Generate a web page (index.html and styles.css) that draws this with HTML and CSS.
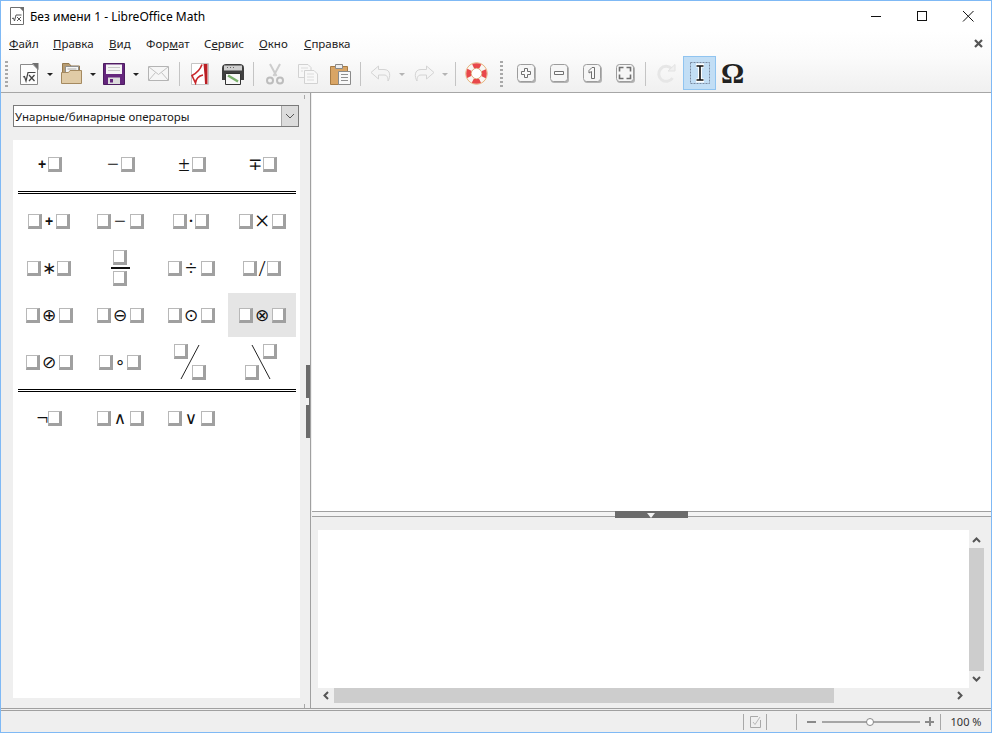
FILE: index.html
```html
<!DOCTYPE html>
<html lang="ru">
<head>
    <meta charset="UTF-8">
    <title>Без имени 1 - LibreOffice Math</title>
    <link rel="stylesheet" href="styles.css">
</head>
<body>
<div class="window">

    <!-- title bar -->
    <div class="titlebar">
        <svg class="app-icon" width="16" height="18" viewBox="0 0 16 18">
            <path d="M1.5 .5H11L14.5 4V17.5H1.5Z" fill="#fff" stroke="#6e6e6e"/>
            <path d="M10.5 0H15V5Z" fill="#6e6e6e"/>
            <path d="M3 11.5L4.5 11L5.5 14L7 8H12.5" fill="none" stroke="#555"/>
            <path d="M8 10L12 14M12 10L8 14" stroke="#555"/>
        </svg>
        <span class="title-text">Без имени 1 - LibreOffice Math</span>
        <div class="win-controls">
            <svg class="win-btn" width="46" height="30" viewBox="0 0 46 30"><path d="M18 15.5H28" stroke="#111"/></svg>
            <svg class="win-btn" width="46" height="30" viewBox="0 0 46 30"><rect x="18.5" y="10.5" width="9" height="9" fill="none" stroke="#111"/></svg>
            <svg class="win-btn" width="46" height="30" viewBox="0 0 46 30"><path d="M18 10L28.5 20.5M28.5 10L18 20.5" stroke="#111"/></svg>
        </div>
    </div>

    <!-- menu -->
    <div class="menubar">
        <span class="menu-item m-file"><u>Ф</u>айл</span>
        <span class="menu-item m-edit"><u>П</u>равка</span>
        <span class="menu-item m-view"><u>В</u>ид</span>
        <span class="menu-item m-format">Фор<u>м</u>ат</span>
        <span class="menu-item m-tools">С<u>е</u>рвис</span>
        <span class="menu-item m-window"><u>О</u>кно</span>
        <span class="menu-item m-help"><u>С</u>правка</span>
        <svg class="menu-close" width="9" height="9" viewBox="0 0 9 9"><path d="M1 1L8 8M8 1L1 8" stroke="#555" stroke-width="2.2"/></svg>
    </div>

    <!-- toolbar -->
    <div class="toolbar">
        <div class="grip first"></div>

        <div class="tb-btn">
            <svg width="22" height="24" viewBox="0 0 22 24">
                <path d="M2.5 2.5H15L19.5 7V22.5H2.5Z" fill="#fdfdfd" stroke="#8a8a8a"/>
                <path d="M14 1H20.5V8Z" fill="#707070"/>
                <path d="M5 15L6.5 14.5L8 19L10 10.5H17.5" fill="none" stroke="#444" stroke-width="1.2"/>
                <path d="M11 13L16.5 19M16.5 13L11 19" stroke="#444" stroke-width="1.3"/>
            </svg>
        </div>
        <div class="drop"></div>

        <div class="tb-btn">
            <svg width="21" height="21" viewBox="0 0 21 21">
                <path d="M1.5 .5H8L10 3H18.5V12H1.5Z" fill="#b79c72" stroke="#94794f"/>
                <path d="M4.5 3.5H17.5V11H4.5Z" fill="#f7f7f5" stroke="#8f8f8f"/>
                <path d="M6.5 6H15.5" stroke="#aaa"/>
                <path d="M.5 9.5H7.5L9 7.5H20.5V20.5H.5Z" fill="#e0cba6" stroke="#a58a60"/>
            </svg>
        </div>
        <div class="drop tight"></div>

        <div class="tb-btn">
            <svg width="22" height="22" viewBox="0 0 22 22">
                <path d="M.5 .5H21.5V21.5H.5Z" fill="#64267c" stroke="#4d1c60"/>
                <path d="M3 1.5H19V11H3Z" fill="#f4f4f4"/>
                <path d="M5 4.5H17M5 7.5H17" stroke="#c8c8c8"/>
                <path d="M5 14.5H17V21H5Z" fill="#dcdcdc"/>
                <path d="M7 16H10V19.5H7Z" fill="#64267c"/>
            </svg>
        </div>
        <div class="drop wide"></div>

        <div class="tb-btn">
            <svg width="21" height="15" viewBox="0 0 21 15">
                <path d="M.5 .5H20.5V14.5H.5Z" fill="#f6f6f6" stroke="#b4b4b4"/>
                <path d="M1 1L10.5 8.5L20 1M1 14L7.5 6.5M20 14L13.5 6.5" fill="none" stroke="#c2c2c2"/>
            </svg>
        </div>
        <div class="sep w8"></div>

        <div class="tb-btn">
            <svg width="20" height="22" viewBox="0 0 20 22">
                <path d="M1.5 .5H18.5V21.5H1.5Z" fill="#fff" stroke="#c4c4c4"/>
                <path d="M12 1.5C10 7 7 10 2 12.5L5.5 20C6 16 8 13 13 12" fill="none" stroke="#c8262a" stroke-width="1.6"/>
                <path d="M13.5 1H17.5V21H15L14.5 12Z" fill="#b91f24"/>
            </svg>
        </div>
        <div class="tb-btn">
            <svg width="24" height="22" viewBox="0 0 24 22">
                <path d="M1 5C1 2 3 1 5 1H19C21 1 23 2 23 5V17H1Z" fill="#3f3f3f"/>
                <path d="M3 2.5H21V7.5H3Z" fill="#cfcfcf"/>
                <path d="M6 4.5H7M9 4.5H10M12 4.5H13" stroke="#666"/>
                <path d="M4.5 10.5H19.5V21.5H4.5Z" fill="#f8f8f8" stroke="#333"/>
                <path d="M7 12.5L17 18.5" stroke="#7ab06c" stroke-width="2.5"/>
            </svg>
        </div>
        <div class="sep w9"></div>

        <div class="tb-btn off">
            <svg width="18" height="22" viewBox="0 0 18 22">
                <path d="M4 1L10.5 13M14 1L7.5 13" stroke="#cdcdcd" stroke-width="2"/>
                <circle cx="4" cy="17.5" r="3" fill="none" stroke="#bdbdbd" stroke-width="2"/>
                <circle cx="14" cy="17.5" r="3" fill="none" stroke="#bdbdbd" stroke-width="2"/>
            </svg>
        </div>
        <div class="tb-btn off">
            <svg width="20" height="20" viewBox="0 0 20 20">
                <path d="M.5 .5H10L13 3.5V13.5H.5Z" fill="#f8f8f8" stroke="#d2d2d2"/>
                <path d="M6.5 6.5H16L19.5 10V19.5H6.5Z" fill="#f8f8f8" stroke="#d2d2d2"/>
                <path d="M3 4H10M3 7H5M9 10H16M9 13H16M9 16H16" stroke="#dcdcdc"/>
            </svg>
        </div>
        <div class="tb-btn">
            <svg width="21" height="22" viewBox="0 0 21 22">
                <path d="M.5 3.5H17.5V21.5H.5Z" fill="#d9a565" stroke="#a67b46"/>
                <path d="M5.5 1.5H12.5V5.5H5.5Z" fill="#eee" stroke="#8a8a8a"/>
                <path d="M8.5 8.5H20.5V21.5H8.5Z" fill="#f8f8f8" stroke="#8a8a8a"/>
                <path d="M11 11.5H18M11 14.5H18M11 17.5H18" stroke="#8f8f8f"/>
            </svg>
        </div>
        <div class="sep w7"></div>

        <div class="tb-btn off">
            <svg width="22" height="18" viewBox="0 0 22 18">
                <path d="M8.5 1L1 7.5L8.5 14V10H14C17 10 18 12 18 16C20.5 12 21 4.5 14 4.5H8.5Z" fill="#f5f5f5" stroke="#d4d4d4"/>
            </svg>
        </div>
        <div class="drop off-arrow"></div>
        <div class="tb-btn off">
            <svg width="22" height="18" viewBox="0 0 22 18">
                <path d="M13.5 1L21 7.5L13.5 14V10H8C5 10 4 12 4 16C1.5 12 1 4.5 8 4.5H13.5Z" fill="#f5f5f5" stroke="#d4d4d4"/>
            </svg>
        </div>
        <div class="drop off-arrow w11"></div>
        <div class="sep w9"></div>

        <div class="tb-btn">
            <svg width="23" height="23" viewBox="0 0 23 23">
                <circle cx="11.5" cy="11.5" r="10.8" fill="#f6e7d4" stroke="#e5b27a"/>
                <circle cx="11.5" cy="11.5" r="7.8" fill="none" stroke="#f8f6f3" stroke-width="5"/>
                <circle cx="11.5" cy="11.5" r="7.8" fill="none" stroke="#e8484a" stroke-width="5" stroke-dasharray="7.25 5" stroke-dashoffset="3.6"/>
                <circle cx="11.5" cy="11.5" r="5.2" fill="#fff" stroke="#d8a06a" stroke-width=".8"/>
            </svg>
        </div>
        <div class="grip mid"></div>

        <div class="tb-btn">
            <svg class="zoom-icon" width="19" height="19" viewBox="0 0 19 19">
                <rect class="shade" x="1" y="2" width="18" height="17" rx="3"/>
                <rect class="key" x=".5" y=".5" width="17" height="17" rx="3"/>
                <path class="glyph" d="M7.5 4.5H10.5V7.5H13.5V10.5H10.5V13.5H7.5V10.5H4.5V7.5H7.5Z"/>
            </svg>
        </div>
        <div class="tb-btn">
            <svg class="zoom-icon" width="19" height="19" viewBox="0 0 19 19">
                <rect class="shade" x="1" y="2" width="18" height="17" rx="3"/>
                <rect class="key" x=".5" y=".5" width="17" height="17" rx="3"/>
                <path class="glyph" d="M4.5 7.5H13.5V10.5H4.5Z"/>
            </svg>
        </div>
        <div class="tb-btn">
            <svg class="zoom-icon" width="19" height="19" viewBox="0 0 19 19">
                <rect class="shade" x="1" y="2" width="18" height="17" rx="3"/>
                <rect class="key" x=".5" y=".5" width="17" height="17" rx="3"/>
                <path class="glyph" d="M9 3.5H11.5V14.5H8.5V7.5L6 9V6.5Z"/>
            </svg>
        </div>
        <div class="tb-btn">
            <svg class="zoom-icon" width="19" height="19" viewBox="0 0 19 19">
                <rect class="shade" x="1" y="2" width="18" height="17" rx="3"/>
                <rect class="key" x=".5" y=".5" width="17" height="17" rx="3"/>
                <path class="corner" d="M3.5 7.5V3.5H7.5M10.5 3.5H14.5V7.5M14.5 10.5V14.5H10.5M7.5 14.5H3.5V10.5"/>
            </svg>
        </div>
        <div class="sep w7"></div>

        <div class="tb-btn off">
            <svg width="20" height="20" viewBox="0 0 20 20">
                <path d="M16.5 14A7.5 7.5 0 1 1 15.5 4.5" fill="none" stroke="#e6e6e6" stroke-width="3"/>
                <path d="M12 7H19V.5Z" fill="#f0f0f0" stroke="#e2e2e2"/>
            </svg>
        </div>
        <div class="tb-btn active">
            <svg width="20" height="22" viewBox="0 0 20 22">
                <rect x=".5" y=".5" width="19" height="21" fill="none" stroke="#7a8aa0" stroke-dasharray="2 1"/>
                <path d="M6 3.5H14M6 18.5H14M10 3.5V18.5" fill="none" stroke="#fff" stroke-width="4"/>
                <path d="M6.5 4H13.5M6.5 18H13.5M10 4V18" fill="none" stroke="#111" stroke-width="1.6"/>
            </svg>
        </div>
        <div class="tb-btn omega">Ω</div>
    </div>

    <!-- main area -->
    <div class="main">
        <aside class="sidebar">
            <div class="combo">
                <span class="combo-text">Унарные/бинарные операторы</span>
                <span class="combo-btn">
                    <svg width="10" height="6" viewBox="0 0 10 6"><path d="M1 1L5 5L9 1" fill="none" stroke="#555"/></svg>
                </span>
            </div>
            <div class="palette">
                <div class="row">
                    <div class="cell"><b class="op bold pre">+</b><i class="ph"></i></div>
                    <div class="cell"><b class="op pre16">−</b><i class="ph"></i></div>
                    <div class="cell"><b class="op pre16">±</b><i class="ph"></i></div>
                    <div class="cell"><b class="op circ pre16">∓</b><i class="ph"></i></div>
                </div>
                <div class="rule"></div>
                <div class="row">
                    <div class="cell"><i class="ph"></i><b class="op bold">+</b><i class="ph"></i></div>
                    <div class="cell"><i class="ph"></i><b class="op">−</b><i class="ph"></i></div>
                    <div class="cell"><i class="ph"></i><b class="op narrow">·</b><i class="ph"></i></div>
                    <div class="cell"><i class="ph"></i><b class="op times">×</b><i class="ph"></i></div>
                </div>
                <div class="row">
                    <div class="cell"><i class="ph"></i><b class="op circ w16">∗</b><i class="ph"></i></div>
                    <div class="cell stack"><i class="ph"></i><span class="frac-bar"></span><i class="ph"></i></div>
                    <div class="cell"><i class="ph"></i><b class="op">÷</b><i class="ph"></i></div>
                    <div class="cell"><i class="ph"></i><b class="op w10">/</b><i class="ph"></i></div>
                </div>
                <div class="row">
                    <div class="cell"><i class="ph"></i><b class="op circ">⊕</b><i class="ph"></i></div>
                    <div class="cell"><i class="ph"></i><b class="op circ">⊖</b><i class="ph"></i></div>
                    <div class="cell"><i class="ph"></i><b class="op circ">⊙</b><i class="ph"></i></div>
                    <div class="cell hover"><i class="ph"></i><b class="op circ">⊗</b><i class="ph"></i></div>
                </div>
                <div class="row">
                    <div class="cell"><i class="ph"></i><b class="op circ">⊘</b><i class="ph"></i></div>
                    <div class="cell"><i class="ph"></i><b class="op circ small">∘</b><i class="ph"></i></div>
                    <div class="cell">
                        <div class="wide-frac">
                            <svg class="slash" width="20" height="36" viewBox="0 0 20 36"><path d="M19 1L1 35" stroke="#222"/></svg>
                            <i class="ph top-left"></i><i class="ph bottom-right"></i>
                        </div>
                    </div>
                    <div class="cell">
                        <div class="wide-frac">
                            <svg class="slash" width="20" height="36" viewBox="0 0 20 36"><path d="M1 1L19 35" stroke="#222"/></svg>
                            <i class="ph top-right"></i><i class="ph bottom-left"></i>
                        </div>
                    </div>
                </div>
                <div class="rule second"></div>
                <div class="row">
                    <div class="cell"><b class="op pre">¬</b><i class="ph"></i></div>
                    <div class="cell"><i class="ph"></i><b class="op circ">∧</b><i class="ph"></i></div>
                    <div class="cell"><i class="ph"></i><b class="op circ">∨</b><i class="ph"></i></div>
                    <div class="cell"></div>
                </div>
            </div>
            <span class="side-handle"><span class="side-arrow"></span></span>
        </aside>

        <section class="workspace">
            <div class="formula-view"></div>
            <div class="split-bar"><span class="split-handle"><span class="split-arrow"></span></span></div>
            <div class="editor-area">
                <div class="editor-row">
                    <div class="editor"></div>
                    <div class="vscroll">
                        <svg width="9" height="6" viewBox="0 0 9 6"><path d="M1 5L4.5 1.5L8 5" fill="none" stroke="#555" stroke-width="2"/></svg>
                        <div class="vthumb"></div>
                        <svg width="9" height="6" viewBox="0 0 9 6"><path d="M1 1L4.5 4.5L8 1" fill="none" stroke="#555" stroke-width="2"/></svg>
                    </div>
                </div>
                <div class="hscroll">
                    <svg width="6" height="9" viewBox="0 0 6 9"><path d="M5 1L1.5 4.5L5 8" fill="none" stroke="#555" stroke-width="2"/></svg>
                    <div class="hthumb"></div>
                    <svg width="6" height="9" viewBox="0 0 6 9"><path d="M1 1L4.5 4.5L1 8" fill="none" stroke="#555" stroke-width="2"/></svg>
                </div>
            </div>
        </section>
    </div>

    <!-- status bar -->
    <div class="statusbar">
        <div class="st-sep"></div>
        <div class="st-doc">
            <svg width="11" height="12" viewBox="0 0 11 12">
                <path d="M10.5 4V11.5H.5V.5H8" fill="none" stroke="#a8a8a8"/>
                <path d="M3 6L5 8.5L10 1" fill="none" stroke="#b8b8b8"/>
            </svg>
        </div>
        <div class="st-sep"></div>
        <div class="st-gap"></div>
        <div class="st-sep"></div>
        <div class="st-zoom">
            <span class="z-minus"></span>
            <span class="z-track"><span class="z-knob"></span></span>
            <span class="z-plus"></span>
        </div>
        <div class="st-sep"></div>
        <div class="st-percent">100 %</div>
    </div>
</div>
</body>
</html>
```

FILE: styles.css
```css
* {
    margin: 0;
    padding: 0;
    box-sizing: border-box;
}

html, body {
    width: 992px;
    height: 733px;
    overflow: hidden;
}

body {
    font-family: "Noto Sans", sans-serif;
    font-size: 12px;
    color: #1a1a1a;
    background: #efefef;
}

.window {
    width: 992px;
    height: 733px;
    display: flex;
    flex-direction: column;
    border: 1px solid #7fb9f5;
    background: #efefef;
}

/* title bar */
.titlebar {
    height: 30px;
    flex: none;
    display: flex;
    align-items: center;
    background: #fff;
    padding-left: 8px;
}

.app-icon {
    flex: none;
}

.title-text {
    margin-left: 5px;
    font-size: 12px;
    color: #000;
}

.win-controls {
    margin-left: auto;
    display: flex;
}

.win-btn {
    display: block;
}

/* menu */
.menubar {
    height: 25px;
    flex: none;
    display: flex;
    align-items: center;
    background: linear-gradient(#fff, #fbfbfb);
    padding-left: 8px;
    padding-right: 8px;
    font-size: 11.5px;
}

.menu-item {
    color: #222;
}

.m-file { width: 44px; }
.m-edit { width: 56px; }
.m-view { width: 37px; }
.m-format { width: 58px; }
.m-tools { width: 55px; }
.m-window { width: 45px; }

.menu-close {
    margin-left: auto;
}

/* toolbar */
.toolbar {
    height: 37px;
    flex: none;
    display: flex;
    align-items: center;
    padding-bottom: 1px;
    background: linear-gradient(#fbfbfb, #f0f0f0);
    border-bottom: 1px solid #a6a6a6;
}

.grip {
    height: 26px;
    background: repeating-linear-gradient(#a9a9a9 0 2px, transparent 2px 4px);
    flex: none;
    background-size: 3px 100%;
    background-repeat: no-repeat;
}

.grip.first {
    width: 11px;
    background-position: 4px 0;
}

.grip.mid {
    width: 17px;
    background-position: 7px 0;
}

.tb-btn {
    width: 33px;
    height: 34px;
    flex: none;
    display: flex;
    align-items: center;
    justify-content: center;
}

.tb-btn.active {
    background: #c2def5;
    border: 1px solid #90c4f0;
    margin-left: 1px;
    align-self: flex-start;
}

.omega {
    font-family: "Liberation Serif", serif;
    font-size: 29px;
    font-weight: bold;
    color: #222;
    line-height: 1;
}

.drop {
    width: 10px;
    height: 34px;
    flex: none;
    position: relative;
}

.drop::after {
    content: "";
    position: absolute;
    left: 2px;
    top: 16px;
    border-left: 3px solid transparent;
    border-right: 3px solid transparent;
    border-top: 3px solid #222;
}

.drop.tight { width: 9px; }
.drop.wide { width: 12px; }
.drop.w11 { width: 11px; }
.drop.wide::after { left: 3px; }
.drop.off-arrow::after { border-top-color: #b4b4b4; }

.sep {
    height: 24px;
    flex: none;
    background: linear-gradient(#c4c4c4, #c4c4c4) center / 1px 100% no-repeat;
}

.sep.w7 { width: 7px; }
.sep.w8 { width: 8px; }
.sep.w9 { width: 9px; }

.zoom-icon .shade {
    fill: #b4b4b4;
}

.zoom-icon .key {
    fill: #f6f6f6;
    stroke: #9c9c9c;
}

.zoom-icon .glyph {
    stroke: #707070;
    fill: #fafafa;
}

.zoom-icon .corner {
    fill: none;
    stroke: #707070;
    stroke-width: 1.6;
}

/* main */
.main {
    flex: 1;
    min-height: 0;
    display: flex;
    border-bottom: 1px solid #a0a0a0;
}

.sidebar {
    width: 310px;
    flex: none;
    position: relative;
    padding: 12px 10px 10px 12px;
    border-right: 1px solid #a0a0a0;
    display: flex;
    flex-direction: column;
    background: #efefef;
}

.sidebar::before,
.sidebar::after {
    content: "";
    position: absolute;
    left: 303px;
    width: 1px;
    height: 4px;
    background: #a8a8a8;
}

.sidebar::before { top: 2px; }
.sidebar::after { bottom: 0; }

.combo {
    height: 22px;
    flex: none;
    display: flex;
    align-items: stretch;
    background: #fff;
    border: 1px solid #7a7a7a;
    margin-right: 1px;
    font-size: 11.5px;
}

.combo-text {
    flex: 1;
    line-height: 21px;
    padding-left: 1px;
}

.combo-btn {
    width: 17px;
    background: #dcdcdc;
    border-left: 1px solid #a8a8a8;
    display: flex;
    align-items: center;
    justify-content: center;
}

.palette {
    margin-top: 13px;
    flex: 1;
    background: #fff;
    padding: 2px 2px 0 2px;
}

.row {
    display: grid;
    grid-template-columns: repeat(4, 68px);
    column-gap: 3px;
    margin-bottom: 3px;
}

.cell {
    height: 44px;
    display: flex;
    align-items: center;
    justify-content: center;
}

.cell.hover {
    background: #e5e5e5;
}

.cell.stack {
    flex-direction: column;
    gap: 2px;
}

.ph {
    display: block;
    width: 14px;
    height: 15px;
    flex: none;
    background: #fff;
    border: 1px solid #b8b8b8;
    border-right: 3px solid #a0a0a0;
    border-bottom: 3px solid #a0a0a0;
}

.op {
    width: 19px;
    text-align: center;
    font-family: "Liberation Serif", "DejaVu Sans", serif;
    font-weight: normal;
    font-size: 21px;
    line-height: 16px;
    color: #111;
    flex: none;
}

.op.bold {
    font-family: "Liberation Sans", sans-serif;
    font-weight: bold;
    font-size: 14px;
    width: 14px;
}

.op.pre { width: 11px; }
.op.pre16 { width: 16px; }
.op.w16 { width: 16px; }
.op.w10 { width: 10px; font-size: 24px; }

.op.narrow {
    width: 8px;
}

.op.times {
    font-size: 27px;
}

.op.circ {
    font-family: "DejaVu Sans", sans-serif;
    font-size: 17px;
}

.op.small {
    width: 14px;
}

.frac-bar {
    width: 19px;
    height: 2px;
    background: #111;
    display: block;
    flex: none;
}

.rule {
    height: 3px;
    border-top: 1px solid #000;
    border-bottom: 1px solid #000;
    margin: 5px -1px 5px 3px;
    width: 278px;
}

.rule.second {
    margin-bottom: 4px;
}

.wide-frac {
    width: 32px;
    height: 36px;
    position: relative;
    margin-right: 2px;
}

.slash {
    position: absolute;
    left: 6px;
    top: 0;
}

.wide-frac .ph {
    position: absolute;
}

.top-left { left: 0; top: 0; }
.bottom-right { right: 0; bottom: 0; }
.top-right { right: 0; top: 0; }
.bottom-left { left: 0; bottom: 0; }

.side-handle {
    position: absolute;
    right: 0;
    top: 272px;
    width: 4px;
    height: 73px;
    background: #6b6b6b;
}

.side-arrow {
    position: absolute;
    left: 0;
    top: 33px;
    width: 3px;
    height: 7px;
    background: #f2f2f2;
}

/* right side */
.workspace {
    flex: 1;
    min-width: 0;
    display: flex;
    flex-direction: column;
    margin-left: 1px;
}

.formula-view {
    height: 418px;
    flex: none;
    background: #fff;
}

.split-bar {
    height: 6px;
    flex: none;
    border-top: 1px solid #a0a0a0;
    border-bottom: 1px solid #a0a0a0;
    background: #f4f4f4;
    position: relative;
}

.split-handle {
    position: absolute;
    left: 303px;
    top: -1px;
    width: 73px;
    height: 7px;
    background: #6b6b6b;
}

.split-arrow {
    position: absolute;
    left: 32px;
    top: 2px;
    border-left: 4px solid transparent;
    border-right: 4px solid transparent;
    border-top: 5px solid #f4f4f4;
}

.editor-area {
    flex: 1;
    min-height: 0;
    padding: 13px 7px 0 6px;
    display: flex;
    flex-direction: column;
}

.editor-row {
    height: 158px;
    flex: none;
    display: flex;
}

.editor {
    flex: 1;
    background: #fff;
}

.vscroll {
    width: 15px;
    flex: none;
    display: flex;
    flex-direction: column;
    align-items: center;
    justify-content: space-between;
    padding: 7px 0 6px;
}

.vthumb {
    width: 15px;
    height: 123px;
    background: #cdcdcd;
}

.hscroll {
    height: 15px;
    flex: none;
    display: flex;
    align-items: center;
    width: 652px;
    padding: 0 7px 0 5px;
}

.hthumb {
    width: 500px;
    height: 15px;
    background: #cdcdcd;
    margin-left: 5px;
    margin-right: auto;
}

/* status bar */
.statusbar {
    height: 22px;
    flex: none;
    display: flex;
    align-items: center;
    justify-content: flex-end;
    border-top: 1px solid #a0a0a0;
    margin-top: 1px;
    background: #efefef;
    font-size: 11px;
    color: #333;
}

.st-sep {
    width: 1px;
    height: 16px;
    background: #a8a8a8;
    flex: none;
}

.st-doc {
    width: 22px;
    display: flex;
    justify-content: center;
}

.st-gap {
    width: 29px;
}

.st-zoom {
    width: 143px;
    display: flex;
    align-items: center;
    padding-left: 10px;
}

.z-minus {
    width: 9px;
    height: 2px;
    background: #8a8a8a;
    flex: none;
}

.z-track {
    width: 98px;
    height: 2px;
    margin-left: 6px;
    background: #a6a6a6;
    position: relative;
    flex: none;
}

.z-knob {
    position: absolute;
    left: 44px;
    top: -3px;
    width: 8px;
    height: 8px;
    border-radius: 50%;
    border: 1px solid #888;
    background: #fff;
}

.z-plus {
    width: 9px;
    height: 9px;
    margin-left: 5px;
    flex: none;
    background: linear-gradient(#8a8a8a, #8a8a8a) center / 9px 2px no-repeat,
                linear-gradient(#8a8a8a, #8a8a8a) center / 2px 9px no-repeat;
}

.st-percent {
    width: 50px;
    text-align: center;
    white-space: nowrap;
}
```
